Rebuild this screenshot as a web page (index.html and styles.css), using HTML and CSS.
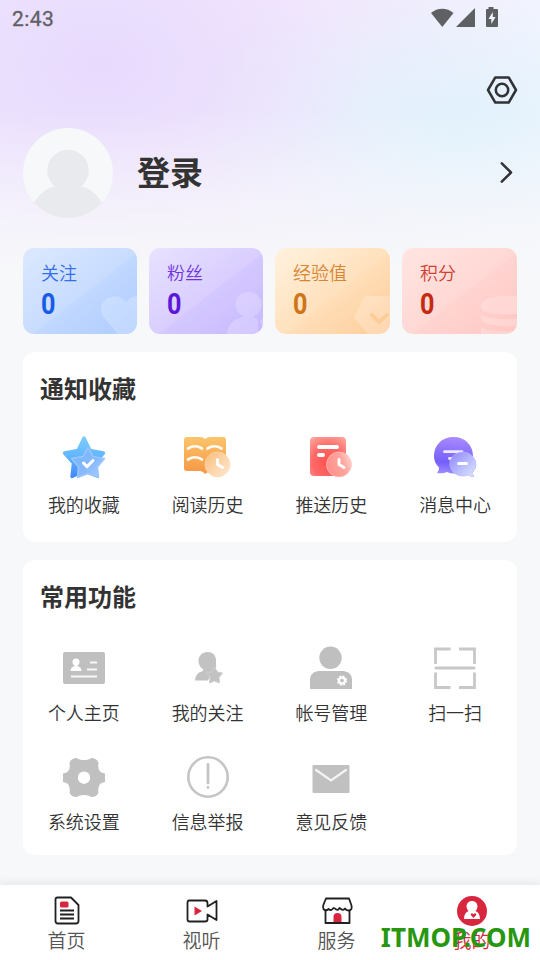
FILE: index.html
```html
<!DOCTYPE html>
<html lang="zh-CN">
<head>
<meta charset="utf-8">
<title>我的</title>
<link rel="stylesheet" href="styles.css">
</head>
<body>
<div class="screen">
  <header class="status">
    <span class="time">2:43</span>
    <svg class="signals" width="68" height="22" viewBox="0 0 68 22" fill="#5f6063">
      <path d="M0 6C6.500 .3 16 .3 22.500 6L11.300 20Z"/>
      <path d="M25 20H44V1Z"/>
      <path d="M57.500 0h5v2H66a1 1 0 0 1 1 1v16A1 1 0 0 1 66 20H56a1 1 0 0 1-1-1V3A1 1 0 0 1 56 2h1.500Z"/>
      <path d="M61.800 5l-4.300 7h2.800v5l4.300-7h-2.800Z" fill="#f0f5fd"/>
    </svg>
  </header>
  <div class="tools">
    <svg width="32" height="30" viewBox="0 0 32 30" fill="none" stroke="#303236" stroke-width="2.500" stroke-linejoin="round">
      <path d="M9.300 2.400H22.700L30 15L22.700 27.600H9.300L2 15Z"/>
      <circle cx="16" cy="15" r="6.200"/>
    </svg>
  </div>
  <section class="profile">
    <svg class="avatar" width="90" height="90" viewBox="0 0 90 90">
      <clipPath id="face"><circle cx="45" cy="45" r="45"/></clipPath>
      <g clip-path="url(#face)">
        <rect width="90" height="90" fill="#f6f8fa"/>
        <g fill="#e8eaee"><circle cx="45" cy="42.500" r="20.700"/><path d="M9 78C15 67 24 58 36 58H54C66 58 75 67 81 78V90H9Z"/></g>
      </g>
    </svg>
    <span class="login">登录</span>
    <svg class="chevron" width="14" height="24" viewBox="0 0 14 24" fill="none" stroke="#303236" stroke-width="2.500" stroke-linejoin="round" stroke-linecap="round"><path d="M1.800 2.300L11 11.500L1.800 20.700"/></svg>
  </section>

  <section class="stats">
    <div class="stat blue"><span class="name">关注</span><b>0</b>
      <svg class="mark" width="36" height="40" viewBox="0 0 36 40"><path d="M25 8C20 .8 10 .8 4 6S-1 20 4 25L17 40H36V2C32 2 28 4 25 8Z"/></svg></div>
    <div class="stat purple"><span class="name">粉丝</span><b>0</b>
      <svg class="mark" width="36" height="43" viewBox="0 0 36 43"><path d="M21.500 1A12.500 12.500 0 0 1 27 25Q26.500 26 27.500 26.500Q31 28 31 31V43H0C1 33 7 28 16 26V25A12.500 12.500 0 0 1 21.500 1ZM33 29L36 28V38Z"/></svg></div>
    <div class="stat orange"><span class="name">经验值</span><b>0</b>
      <svg class="mark" width="36" height="40" viewBox="0 0 36 40"><path d="M13 2H36V40H14L1 25Q-.500 23 1 21L9 5Q10.500 2 13 2Z"/><path class="tick" d="M18 21L25 28L33 21"/></svg></div>
    <div class="stat red"><span class="name">积分</span><b>0</b>
      <svg class="mark" width="36" height="40" viewBox="0 0 36 40"><path d="M0 13C0 5 13 2 25 2H36V20C22 21 0 21 0 13ZM0 20C4 24 19 26 36 25V32C20 33 3 31 0 26ZM0 33C6 37 20 38 36 37V40H0Z"/></svg></div>
  </section>

  <section class="card notice">
    <h2>通知收藏</h2>
    <div class="grid">
      <div class="item">
        <svg width="46" height="46" viewBox="0 0 46 46">
          <defs><linearGradient id="s1" x2="0" y2="1"><stop stop-color="#7bccfc"/><stop offset=".5" stop-color="#60b5fb"/><stop offset="1" stop-color="#4489fa"/></linearGradient><linearGradient id="s2" x2="1" y2="1"><stop stop-color="#73b6fd"/><stop offset=".55" stop-color="#86b8fd"/><stop offset="1" stop-color="#acd0ff"/></linearGradient></defs>
          <path d="M23 3L29 15.500L42.500 18L33.500 28L36 41L23 36L11 41.500L12.500 28L3.500 18L17 15.500Z" fill="url(#s1)" stroke="url(#s1)" stroke-width="3.400" stroke-linejoin="round"/>
          <path d="M27 12.500L32 21.500L43.500 23.500L36.500 32L37.500 42.500L27 38.500L16.500 42.500L17.500 32L10.500 23.500L22 21.500Z" fill="url(#s2)" stroke="#98c7ff" stroke-width="1.500" stroke-linejoin="round"/>
          <path d="M22.500 28L26 31.800L32 25.500" fill="none" stroke="#fff" stroke-width="3" stroke-linecap="round" stroke-linejoin="round"/>
        </svg><span>我的收藏</span></div>
      <div class="item">
        <svg width="46" height="46" viewBox="0 0 46 46" overflow="visible">
          <defs><linearGradient id="b1" x2="0" y2="1"><stop stop-color="#fbc56b"/><stop offset="1" stop-color="#f59645"/></linearGradient><linearGradient id="b2" x2="1" y2="1"><stop stop-color="#f9bd7b"/><stop offset="1" stop-color="#ffead4"/></linearGradient></defs>
          <path d="M-1 5Q-1 2 2 2H16Q18 2 20 4Q22 2 25 2H38Q41 2 41 5V34Q41 37 38 37H25Q22 37 20 39Q18 36 14 36H2Q-1 36-1 33Z" fill="url(#b1)"/>
          <path d="M3 13.500Q10 9 17 13.500M22.500 13.500Q29.500 9 36.500 13.500M3 24.500Q10 20 17 24.500" fill="none" stroke="#fffaf2" stroke-width="2.700" stroke-linecap="round"/>
          <circle cx="32.500" cy="29.500" r="12.500" fill="url(#b2)" stroke="#fddbb6" stroke-width=".6"/>
          <path d="M32.500 24.500V29.500L37.500 32.500" fill="none" stroke="#fff" stroke-width="3" stroke-linecap="round" stroke-linejoin="round"/>
        </svg><span>阅读历史</span></div>
      <div class="item">
        <svg width="46" height="46" viewBox="0 0 46 46">
          <defs><radialGradient id="p1" cx=".5" cy=".65" r=".85"><stop stop-color="#ff514f"/><stop offset=".5" stop-color="#fc6967"/><stop offset="1" stop-color="#fcb4aa"/></radialGradient><linearGradient id="p2" y1=".4" x2="1" y2="0"><stop stop-color="#ff928c"/><stop offset=".55" stop-color="#ffa59d"/><stop offset="1" stop-color="#fee0dc"/></linearGradient></defs>
          <rect x="2" y="2" width="36" height="39" rx="4" fill="url(#p1)"/>
          <path d="M11 12H29M11 20H15" fill="none" stroke="#fff" stroke-width="4" stroke-linecap="round"/>
          <circle cx="31" cy="29.500" r="12.500" fill="url(#p2)" stroke="#fcc7c2" stroke-width=".7"/>
          <path d="M31 24.500V29.500L36 32.500" fill="none" stroke="#fff" stroke-width="3" stroke-linecap="round" stroke-linejoin="round"/>
        </svg><span>推送历史</span></div>
      <div class="item">
        <svg width="46" height="46" viewBox="0 0 46 46">
          <defs><linearGradient id="m1" x1=".4" x2=".3" y2="1"><stop stop-color="#a889fd"/><stop offset=".7" stop-color="#755ffb"/><stop offset="1" stop-color="#9c8bff"/></linearGradient><linearGradient id="m2" x2="1" y2="1"><stop stop-color="#8e82ff"/><stop offset=".45" stop-color="#b1b2ff"/><stop offset="1" stop-color="#dee8ff"/></linearGradient></defs>
          <path d="M21.500 2C10 2 2 10 2 21Q2 28 7 32.500Q7.500 35 5 38Q11 39 15 37Q18 38.500 22 38.500C34 38.500 41 31 41 21C41 10 33 2 21.500 2Z" fill="url(#m1)"/>
          <path d="M12.500 16.700H30M17.500 23.500H26" stroke="#eeeaff" stroke-width="2.800" stroke-linecap="round"/>
          <path d="M30.500 17A13 12 0 1 0 36 40Q38 42 42 41.500L40 38Q44 34.500 44 29.500A13.500 12.500 0 0 0 30.500 17Z" fill="url(#m2)" stroke="#b7b6ff" stroke-width=".7"/>
          <path d="M26.500 28.500H34.500" stroke="#fff" stroke-width="3" stroke-linecap="round"/>
        </svg><span>消息中心</span></div>
    </div>
  </section>

  <section class="card common">
    <h2>常用功能</h2>
    <div class="grid">
      <div class="item">
        <svg width="46" height="46" viewBox="0 0 46 46" fill="#c0c0c0"><rect x="2" y="7" width="42" height="32" rx="2"/><g fill="#fff"><circle cx="15" cy="17" r="3.500"/><path d="M13.500 19h3v2.200Q20.500 22 20.500 26H9.500Q9.500 22 13.500 21.200Z"/></g><path d="M29 17.500H36M26 24.500H36M10 31.500H36" stroke="#f8f8f8" stroke-width="2"/></svg><span>个人主页</span></div>
      <div class="item">
        <svg width="46" height="46" viewBox="0 0 46 46" fill="#c2c2c2"><path d="M22.500 7C17 7 13.500 11 13.500 16Q13.500 21 18 24V26Q10 28 10 35.500H23L26 29L31 22.500Q31.500 21 31 19Q32 7 22.500 7Z"/><path d="M29.500 22L32.500 27L37.500 28L34 32.500L34.500 38L29.500 36L24.500 38L25 32.500L21.500 28L26.500 27Z" stroke="#cfcfcf" stroke-width="1" stroke-linejoin="round"/></svg><span>我的关注</span></div>
      <div class="item">
        <svg width="46" height="46" viewBox="0 0 46 46" fill="#bfbfbf"><circle cx="22.500" cy="12.800" r="11.200"/><path d="M10 26H36Q44 28 44 34V44H2V34Q2 28 10 26Z"/><circle cx="34" cy="35.500" r="3" fill="none" stroke="#fff" stroke-width="2.300"/><circle cx="34" cy="35.500" r="4.400" fill="none" stroke="#fff" stroke-width="1.400" stroke-dasharray="2 1.450"/></svg><span>帐号管理</span></div>
      <div class="item">
        <svg width="46" height="46" viewBox="0 0 46 46" fill="none" stroke="#c8c8c8" stroke-width="2.800"><path d="M18.500 4H3.500V19M27 4H42.500V19M3.500 27.500V42.500H18.500M27 42.500H42.500V27.500"/><path d="M4 23H42" stroke-width="3.200" stroke-linecap="round"/></svg><span>扫一扫</span></div>
      <div class="item">
        <svg width="46" height="46" viewBox="0 0 46 46"><path d="M16 4Q18 6 23 6Q28 6 30 4Q36 4 37.500 9Q36.500 14 39 17.500Q41 19 44 19.500V28Q41 28.500 39 30Q36.500 33 37.500 38.500Q36 43 30 43Q28 41 23 41Q18 41 16 43Q10 43 8.500 38.500Q9.500 33 7 30Q5 28.500 2 28V19.500Q5 19 7 17.500Q9.500 14 8.500 9Q10 4 16 4Z" fill="#c0c0c0"/><circle cx="23" cy="23.700" r="6.200" fill="#fff"/></svg><span>系统设置</span></div>
      <div class="item">
        <svg width="46" height="46" viewBox="0 0 46 46" fill="none" stroke="#c5c5c5"><circle cx="23" cy="23" r="19.700" stroke-width="2.600"/><path d="M23 10.500V29" stroke-width="2.800" stroke-linecap="round"/><circle cx="23" cy="33.500" r="1.400" fill="#c5c5c5" stroke="none"/></svg><span>信息举报</span></div>
      <div class="item">
        <svg width="46" height="46" viewBox="0 0 46 46"><rect x="4.500" y="11" width="37" height="28" rx="1" fill="#c0c0c0"/><path d="M8 16L23 26.500L38 16" fill="none" stroke="#f4f4f4" stroke-width="2.200" stroke-linecap="round"/></svg><span>意见反馈</span></div>
    </div>
  </section>

  <nav class="tabs">
    <div class="tab">
      <svg width="32" height="32" viewBox="0 0 32 32" fill="none" stroke="#202020" stroke-width="1.800" stroke-linejoin="round"><path d="M6.500 2.500H20L27.500 10V26Q27.500 28.500 25 28.500H7Q4.500 28.500 4.500 26V4.500Q4.500 2.500 6.500 2.500Z"/><path d="M9 15.500H23M9 19.500H23M9 23.500H23"/><rect x="9" y="6.500" width="8.500" height="6" rx="1.500" fill="#d7263e" stroke="none"/></svg><span>首页</span></div>
    <div class="tab">
      <svg width="32" height="32" viewBox="0 0 32 32" fill="none" stroke="#202020" stroke-width="1.800" stroke-linejoin="round"><path d="M3 5.500H19Q21.500 5.500 21.500 8V11.500L30.500 6V25L21.500 19.500V24.500Q21.500 26.500 19 26.500H3.500Q1.500 26.500 1.500 24.500V7.500Q1.500 5.500 3 5.500Z"/><path d="M8.500 11.500L16 16L8.500 20.500Z" fill="#d7263e" stroke="none"/></svg><span>视听</span></div>
    <div class="tab">
      <svg width="32" height="32" viewBox="0 0 32 32" fill="none" stroke="#202020" stroke-width="1.800" stroke-linejoin="round"><path d="M4.500 15.500V28H28.500V15.500"/><path d="M5 3.500H28L30.500 10.500Q31.500 15.500 27.500 15.500Q25 15.500 24 13.500Q22 16 20 14L18.500 13Q16.500 16.500 14 13.500L12.500 13Q10 16.500 7.500 14Q5 16.500 2.500 14Q1.500 12.500 2.500 9.500Z"/><path d="M12.500 27V22Q12.500 18 16.500 18T20.500 22V27Z" fill="#d7263e" stroke="none"/></svg><span>服务</span></div>
    <div class="tab active">
      <svg width="32" height="32" viewBox="0 0 32 32"><circle cx="16" cy="16" r="15" fill="#d7263e"/><path d="M16 6C12.500 6 10.500 8.500 10.500 11.500Q10.500 14 12.500 16Q8 18 8 24H24Q24 18 19.500 16Q21.500 14 21.500 11.500C21.500 8.500 19.500 6 16 6Z" fill="#fff"/><path d="M17.500 23L14.800 20Q14.500 18 16.200 18.200L17.500 19.200L18.800 18.200Q20.800 18 20.200 20Z" fill="#d7263e"/></svg><span>我的</span></div>
    <div class="watermark">ITMOP.COM</div>
  </nav>
</div>
</body>
</html>
```
FILE: styles.css
```css
* { box-sizing: border-box; }
body {
  margin: 0;
  font-family: "Noto Sans CJK SC", sans-serif;
  color: #333;
}
svg { display: block; flex: none; }
.screen {
  width: 540px;
  height: 960px;
  overflow: hidden;
  display: flex;
  flex-direction: column;
  background:
    linear-gradient(to bottom, rgba(247,248,250,0) 110px, #f7f8fa 270px),
    radial-gradient(ellipse 260px 190px at 100px 65px, #e7dafd 0%, rgba(231,218,253,0) 100%),
    radial-gradient(ellipse 290px 170px at 460px 130px, #e0f2fc 0%, rgba(224,242,252,0) 100%),
    linear-gradient(100deg, #f0e7fe 0%, #f3e7fc 50%, #f6f3fe 75%, #f4faff 100%);
  background-color: #f7f8fa;
}
.status {
  height: 38px;
  display: flex;
  justify-content: space-between;
  padding: 7px 41px 0 12px;
}
.time {
  font: 400 21px/24px Roboto, sans-serif;
  letter-spacing: .4px;
  color: #5f6063;
  -webkit-text-stroke: .3px #5f6063;
}
.tools {
  display: flex;
  justify-content: flex-end;
  padding: 37px 22px 0 0;
  height: 90px;
}
.profile {
  height: 90px;
  display: flex;
  align-items: center;
  padding: 0 26px 0 23px;
}
.login {
  flex: 1;
  margin: -4px 0 0 24px;
  font-size: 33px;
  line-height: 48px;
  font-weight: 700;
}
.stats {
  margin-top: 30px;
  padding: 0 23px;
  display: grid;
  grid-template-columns: 114px 114px 115px 115px;
  gap: 12px;
}
.stat {
  position: relative;
  height: 86px;
  border-radius: 11px;
  overflow: hidden;
  padding: 11px 18px 0;
}
.stat .name {
  display: block;
  font-size: 18px;
  line-height: 26px;
  font-weight: 350;
  opacity: .85;
}
.stat b {
  display: block;
  margin-top: 1px;
  font: 700 30px/36px Roboto, sans-serif;
  transform: scaleX(.84);
  transform-origin: 0 0;
}
.mark { position: absolute; right: 0; bottom: 0; }
.mark path { fill: rgba(255,255,255,.22); }
.mark .tick { fill: none; stroke: #fdcc98; stroke-width: 4; stroke-linecap: round; stroke-linejoin: round; }
.blue { color: #175be6; background: linear-gradient(142deg, #dce9ff, #c8dcff 53%, #c1d8ff 54%, #adccff); }
.purple { color: #5b18d8; background: linear-gradient(142deg, #e9e2ff, #d9ceff 53%, #d4c8ff 54%, #c7b8ff); }
.orange { color: #cf7519; background: linear-gradient(142deg, #fff2df, #ffe1bd 53%, #ffdeb8 54%, #ffcc99); }
.red { color: #c62812; background: linear-gradient(142deg, #ffe5e2, #ffd8d4 53%, #ffd4d0 54%, #ffc7c3); }
.card {
  margin: 18px 23px 0;
  background: #fff;
  border-radius: 12px;
}
.notice { height: 190px; }
.common { height: 295px; }
.card h2 {
  margin: 0;
  padding: 18px 17px 1px;
  font-size: 24px;
  line-height: 36px;
  font-weight: 700;
}
.grid {
  display: grid;
  grid-template-columns: repeat(4, 1fr);
  grid-auto-rows: 109px;
  margin-left: -1px;
}
.notice .grid { padding-top: 28px; }
.common .grid { padding-top: 30px; }
.item {
  display: flex;
  flex-direction: column;
  align-items: center;
  font-size: 18px;
  line-height: 26px;
  font-weight: 350;
}
.item span { margin-top: 10px; }
.common .item span { margin-top: 8px; }
.tabs {
  position: relative;
  height: 75px;
  margin-top: auto;
  display: grid;
  grid-template-columns: repeat(4, 135px);
  margin-left: -1px;
  background: #fff;
  box-shadow: 0 -2px 9px rgba(0,0,0,.08);
}
.tab {
  display: flex;
  flex-direction: column;
  align-items: center;
  padding-top: 10px;
  font-size: 19px;
  line-height: 26px;
  font-weight: 350;
  color: #555;
}
.active { color: #d7263e; }
.watermark {
  position: absolute;
  right: 9px;
  top: 35px;
  font: 700 26px/34px "Noto Sans", sans-serif;
  color: #279711;
}
```
